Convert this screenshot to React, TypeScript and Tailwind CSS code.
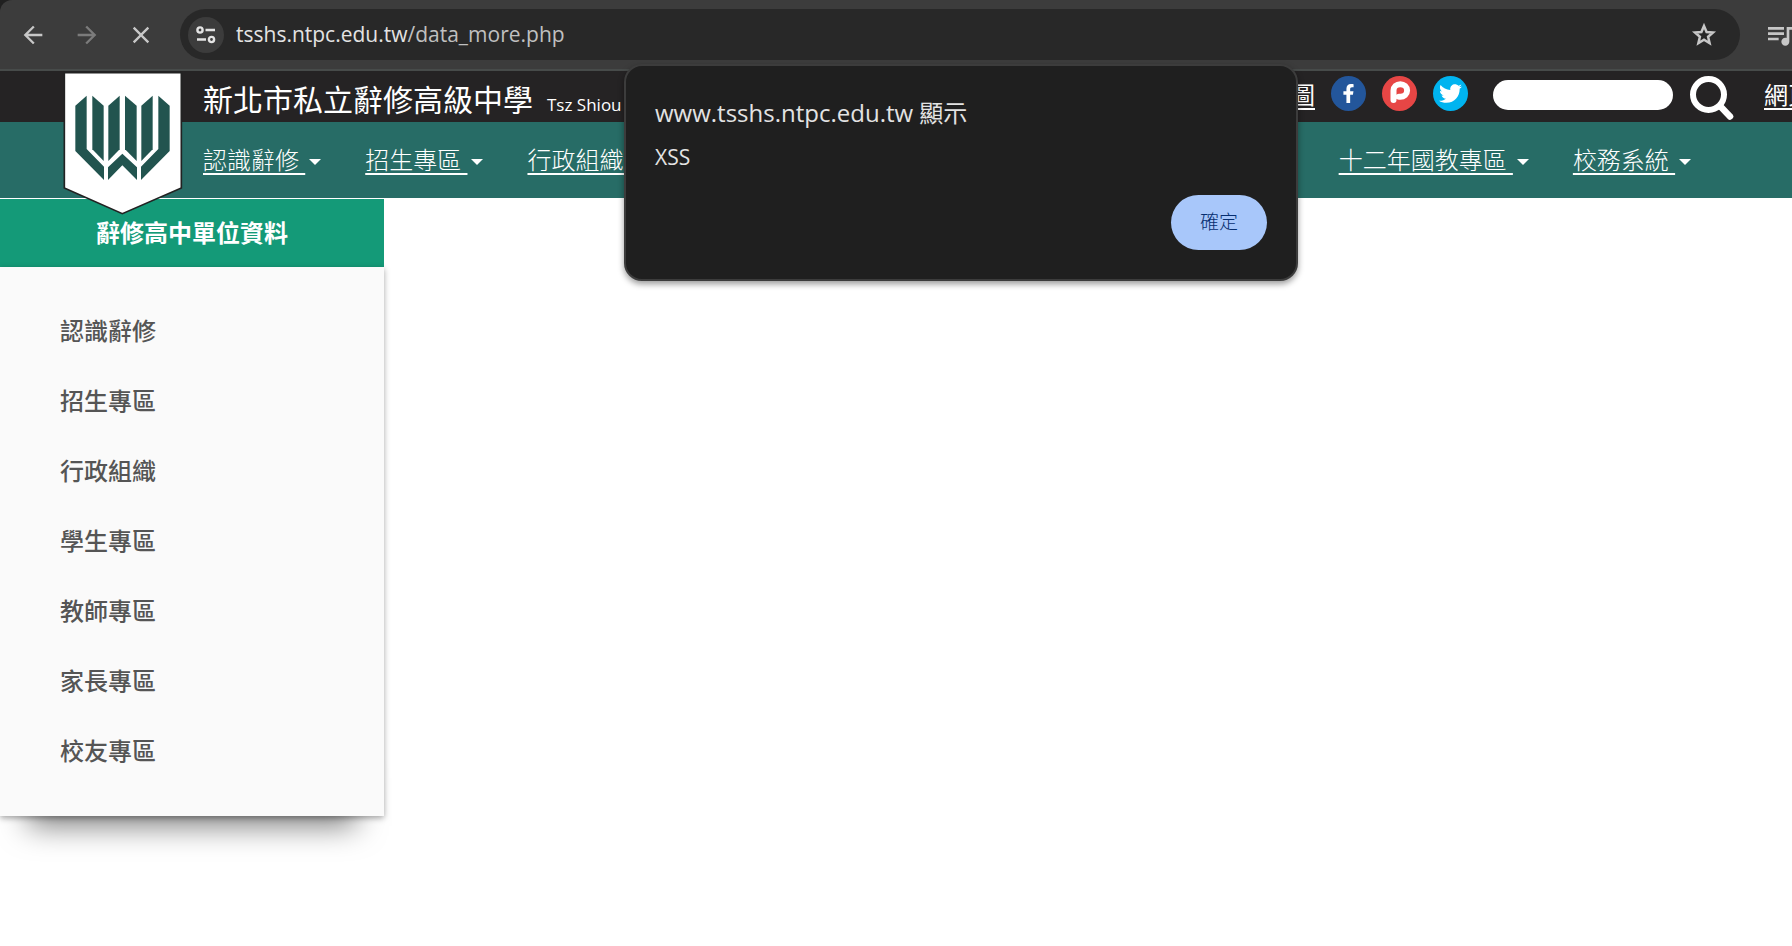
import { MdArrowBack, MdArrowForward, MdClose, MdQueueMusic } from "react-icons/md";
import { FaFacebookF, FaTwitter } from "react-icons/fa";

const navItems = ["認識辭修", "招生專區", "行政組織", "學生專區", "教師專區", "家長專區", "校友專區", "十二年國教專區", "校務系統"];
const sideItems = ["認識辭修", "招生專區", "行政組織", "學生專區", "教師專區", "家長專區", "校友專區"];

function BrowserBar() {
  return (
    <div className="bg-[#202020]">
      <div className="flex h-[71px] items-start overflow-hidden rounded-tl-xl border-b-2 border-[#474b4a] bg-[#3c3c3c] pt-[9px] pl-[19px]">
        <div className="flex h-[51px] shrink-0 items-center gap-[26px] text-[#c7c7c7]">
          <button type="button" aria-label="Back">
            <MdArrowBack size={28} />
          </button>
          <button type="button" aria-label="Forward" className="text-[#7b7b7b]">
            <MdArrowForward size={28} />
          </button>
          <button type="button" aria-label="Stop">
            <MdClose size={28} />
          </button>
        </div>
        <div className="ml-[25px] flex h-[51px] min-w-0 flex-1 items-center rounded-full bg-[#282828] pr-[22px] pl-2">
          <button type="button" aria-label="Site information" className="flex size-9 shrink-0 items-center justify-center rounded-full bg-[#3c3c3c]">
            <svg viewBox="0 0 20 18" className="h-[18px] w-5" fill="none" stroke="#e3e3e3" strokeWidth="2.4">
              <circle cx="4" cy="4" r="2.6" />
              <path d="M9.500 4H19M1 13.500h9" />
              <circle cx="15.500" cy="13.500" r="2.600" />
            </svg>
          </button>
          <p className="ml-3 flex-1 truncate text-[21px] text-[#e3e3e3]">
            tsshs.ntpc.edu.tw<span className="text-[#c0c0c0]">/data_more.php</span>
          </p>
          <button type="button" aria-label="Bookmark">
            <svg viewBox="0 0 28 28" className="size-7" fill="none" stroke="#c7c7c7" strokeWidth="2.5">
              <path d="M14 5L16.600 11L23 11.500L18.100 15.800L19.600 22.200L14 18.800L8.400 22.200L9.900 15.800L5 11.500L11.400 11Z" />
            </svg>
          </button>
        </div>
        <div className="flex h-[51px] w-[52px] shrink-0 items-center pl-[24px] text-[#c7c7c7]">
          <MdQueueMusic size={32} className="shrink-0" />
        </div>
      </div>
    </div>
  );
}

function SchoolLogo() {
  return (
    <svg viewBox="39 33 360 432" className="h-36 w-[120px]">
      <path d="M43 38H394V384L217 461L43 384Z" fill="#fff" stroke="#222" strokeWidth="5" />
      <g fill="#22544f">
        <path d="M110 107V267L162 320V360L76 273V137Z" />
        <path d="M127 107L161 137V303L127 268Z" />
        <path d="M209 107V268L175 303V137Z" />
        <path d="M225 107L260 137V303L225 268Z" />
        <path d="M308 107V268L274 303V137Z" />
        <path d="M325 107L359 137V273L273 360V320L325 267Z" />
        <path d="M217 281L261 322V360L217 316L174 360V322Z" />
      </g>
    </svg>
  );
}

function Header() {
  return (
    <header className="relative text-white">
      <a href="#home" aria-label="辭修高中" className="absolute top-0 left-[63px] z-10">
        <SchoolLogo />
      </a>
      <div className="flex h-[51px] justify-between overflow-hidden bg-[#252324] pl-[203px]">
        <h1 className="flex items-baseline gap-[14px] pt-2 text-[30px] leading-[42px] whitespace-nowrap">
          新北市私立辭修高級中學
          <span className="text-[17px]">Tsz Shiou</span>
        </h1>
        <div className="-mr-[68px] flex shrink-0 text-2xl whitespace-nowrap">
          <a href="#map" className="pt-2 underline decoration-2 underline-offset-4">圖</a>
          <div className="ml-4 flex gap-4 pt-[5px]">
            <a href="#facebook" aria-label="Facebook" className="flex size-[35px] items-center justify-center rounded-full bg-[#23569b]">
              <FaFacebookF size={19} />
            </a>
            <a href="#pixnet" aria-label="Pixnet" className="flex size-[35px] items-center justify-center rounded-full bg-[#e74645]">
              <svg viewBox="0 0 35 35" className="size-[35px]" fill="none" stroke="#fff" strokeWidth="6" strokeLinecap="round" strokeLinejoin="round">
                <path d="M11.500 24V14.500a6.800 6.300 0 1 1 6.800 6.300H17" />
              </svg>
            </a>
            <a href="#twitter" aria-label="Twitter" className="flex size-[35px] items-center justify-center rounded-full bg-[#00b4f0]">
              <FaTwitter size={23} />
            </a>
          </div>
          <input type="text" aria-label="搜尋" className="mt-[9px] ml-[25px] h-[30px] w-[180px] rounded-full bg-white px-3 text-base text-black" />
          <button type="button" aria-label="Search" className="ml-4 flex pt-[4px]">
            <svg viewBox="0 0 45 45" className="size-[45px]" fill="none" stroke="#fff" strokeLinecap="round">
              <circle cx="19.500" cy="19.500" r="15.500" strokeWidth="6" />
              <path d="M32 32L41 41.500" strokeWidth="6.500" />
            </svg>
          </button>
          <a href="#home" className="ml-[30px] pt-2 underline decoration-2 underline-offset-4">網頁首頁</a>
        </div>
      </div>
      <nav className="flex h-[76px] items-center gap-11 overflow-hidden bg-[#276c66] pl-[203px] text-2xl font-light whitespace-nowrap">
        {navItems.map((item) => (
          <a key={item} href="#menu" className="flex items-center gap-1">
            <span className="whitespace-pre underline decoration-2 underline-offset-4">{item + " "}</span>
            <span className="mt-1 border-x-6 border-t-6 border-x-transparent border-t-white" />
          </a>
        ))}
      </nav>
    </header>
  );
}

function Sidebar() {
  return (
    <aside className="mt-px w-96 text-2xl">
      <h2 className="flex h-[68px] items-center justify-center bg-[#149a78] font-bold text-white">辭修高中單位資料</h2>
      <div className="relative">
        <div className="absolute inset-x-8 bottom-2 h-10 shadow-[0_14px_30px_4px_rgba(0,0,0,0.5)]" />
        <ul className="relative bg-[#fafafa] px-[60px] pt-[29px] pb-[30px] font-medium text-[#555] shadow-[0_2px_6px_rgba(0,0,0,0.35)]">
          {sideItems.map((item) => (
            <li key={item} className="flex h-[70px] items-center">
              <a href="#section">{item}</a>
            </li>
          ))}
        </ul>
      </div>
    </aside>
  );
}

function AlertDialog() {
  return (
    <div
      role="alertdialog"
      aria-labelledby="alert-title"
      className="absolute top-16 left-[calc(50%+65px)] z-20 flex w-[674px] -translate-x-1/2 flex-col rounded-[18px] border-2 border-[#3c3c3c] bg-[#1f1f1f] px-[29px] pt-[31px] pb-[29px] text-[#e3e3e3] shadow-[0_3px_6px_rgba(0,0,0,0.4)]"
    >
      <h2 id="alert-title" className="text-2xl leading-8">www.tsshs.ntpc.edu.tw 顯示</h2>
      <p className="mt-[14px] text-[21px] leading-7">XSS</p>
      <button type="button" className="mt-6 h-[55px] w-24 self-end rounded-full bg-[#a8c7fa] text-[19px] font-light text-[#062e6f]">
        確定
      </button>
    </div>
  );
}

export default function App() {
  return (
    <div className="relative min-h-screen overflow-hidden bg-white font-['Open_Sans','Noto_Sans_CJK_TC',sans-serif]">
      <BrowserBar />
      <Header />
      <Sidebar />
      <AlertDialog />
    </div>
  );
}
